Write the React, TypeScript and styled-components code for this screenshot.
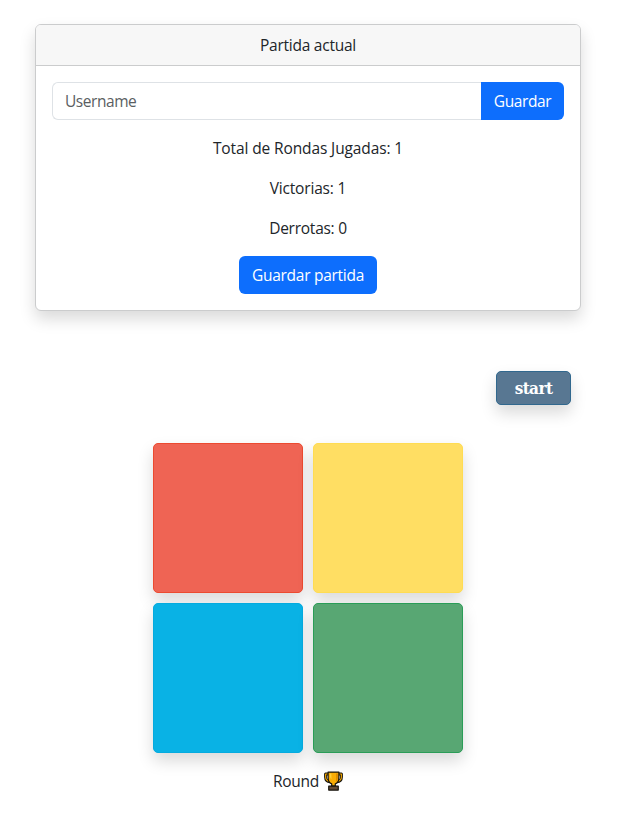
import React from "react";
import styled, { createGlobalStyle } from "styled-components";

const GlobalStyle = createGlobalStyle`
  *, *::before, *::after { box-sizing: border-box; }
  body {
    margin: 0;
    background: #fff;
    color: #212529;
    font-family: "Open Sans", "Noto Sans", sans-serif;
    font-size: 15.5px;
    line-height: 24px;
    overflow: hidden;
  }
`;

const shadow = "0 8px 16px rgba(0, 0, 0, 0.15)";

const Page = styled.main`
  display: flex;
  flex-direction: column;
  align-items: center;
  width: 616px;
  padding-top: 24px;
`;

const Card = styled.section`
  width: 546px;
  border: 1px solid #cbcccd;
  border-radius: 6px;
  background: #fff;
  box-shadow: ${shadow};
`;

const CardHeader = styled.header`
  padding: 8px 16px;
  border-bottom: 1px solid #cbcccd;
  border-radius: 5px 5px 0 0;
  background: #f7f7f7;
  text-align: center;
`;

const CardBody = styled.div`
  display: flex;
  flex-direction: column;
  align-items: center;
  gap: 16px;
  padding: 16px;
`;

const InputGroup = styled.div`
  display: flex;
  width: 100%;
`;

const UserInput = styled.input`
  flex: 1;
  min-width: 0;
  height: 38px;
  padding: 6px 12px;
  border: 1px solid #dee2e6;
  border-right: 0;
  border-radius: 6px 0 0 6px;
  background: #fff;
  font: inherit;
  letter-spacing: -0.45px;
  outline: 0;
  &::placeholder {
    color: #5a5e62;
    opacity: 1;
  }
`;

const PrimaryButton = styled.button<{ $width: number; $attached?: boolean }>`
  width: ${(p) => p.$width}px;
  height: 38px;
  padding: 0;
  border: 0;
  border-radius: ${(p) => (p.$attached ? "0 6px 6px 0" : "6px")};
  background: #0d6efd;
  color: #fff;
  font: inherit;
  letter-spacing: ${(p) => (p.$attached ? -0.4 : -0.27)}px;
  white-space: nowrap;
`;

const Label = styled.p<{ $spacing?: number }>`
  margin: 0;
  white-space: nowrap;
  letter-spacing: ${(p) => p.$spacing ?? -0.25}px;
`;

const StartRow = styled.div`
  display: flex;
  justify-content: flex-end;
  width: 100%;
  margin-top: 60px;
  padding-right: 45px;
`;

const StartButton = styled.button`
  width: 75px;
  height: 34px;
  padding: 0;
  border: 1px solid #31688e;
  border-radius: 5px;
  background: #587792;
  box-shadow: ${shadow};
  color: #fff;
  font: bold 17px/32px "DejaVu Serif Condensed", "DejaVu Serif", serif;
  font-stretch: condensed;
  letter-spacing: -0.6px;
`;

const Board = styled.div`
  display: grid;
  grid-template-columns: repeat(2, 150px);
  grid-auto-rows: 150px;
  gap: 10px;
  margin-top: 38px;
`;

const Tile = styled.button<{ $fill: string; $edge: string }>`
  padding: 0;
  border: 1px solid ${(p) => p.$edge};
  border-radius: 5px;
  background: ${(p) => p.$fill};
  box-shadow: ${shadow};
`;

const RoundLine = styled.div`
  display: flex;
  align-items: center;
  gap: 5px;
  margin-top: 16px;
`;

const TrophySvg = styled.svg`
  display: block;
  width: 19px;
  height: 20px;
`;

function Trophy() {
  return (
    <TrophySvg viewBox="0 0 20 20" preserveAspectRatio="none" aria-hidden="true">
      <g stroke="#16130d" strokeWidth="1.3" strokeLinejoin="round">
        <path d="M5 3H1.6v3c0 3 2 4.5 5 4.7M15 3h3.4v3c0 3-2 4.5-5 4.7" fill="none" strokeWidth="3" />
        <path d="M5 3H1.7v3c0 2.6 1.7 4 4.3 4.4M15 3h3.3v3c0 2.6-1.7 4-4.3 4.4" fill="none" stroke="#f0a500" strokeWidth="1.2" />
        <path d="M4.3 1.1h11.4v5.4c0 3.3-1.4 5.5-3.8 6.3v2.4H8.1v-2.4C5.7 12 4.3 9.8 4.3 6.5z" fill="#f9ad05" />
        <path d="M5 15.2h10v3.9H5z" fill="#654c36" />
      </g>
      <path d="M6.2 2.5h1.6v5.8c-1-.8-1.6-2-1.6-3.5z" fill="#ffcf3c" />
      <path d="M12.8 2.5h1.7v4c0 2.2-.7 3.6-1.7 4.4z" fill="#d98600" />
    </TrophySvg>
  );
}

const tiles = [
  { name: "Rojo", fill: "#ef6454", edge: "#ec4a30" },
  { name: "Amarillo", fill: "#ffde63", edge: "#ffdc52" },
  { name: "Azul", fill: "#09b2e5", edge: "#05abdf" },
  { name: "Verde", fill: "#58a773", edge: "#2a9d57" },
];

export default function App() {
  return (
    <>
      <GlobalStyle />
      <Page>
        <Card>
          <CardHeader><Label>Partida actual</Label></CardHeader>
          <CardBody>
            <InputGroup>
              <UserInput placeholder="Username" />
              <PrimaryButton $width={83} $attached>Guardar</PrimaryButton>
            </InputGroup>
            <Label $spacing={-0.12}>Total de Rondas Jugadas: 1</Label>
            <Label $spacing={-0.17}>Victorias: 1</Label>
            <Label>Derrotas: 0</Label>
            <PrimaryButton $width={138}>Guardar partida</PrimaryButton>
          </CardBody>
        </Card>
        <StartRow><StartButton>start</StartButton></StartRow>
        <Board>
          {tiles.map((t) => (
            <Tile key={t.name} aria-label={t.name} $fill={t.fill} $edge={t.edge} />
          ))}
        </Board>
        <RoundLine><Label>Round</Label><Trophy /></RoundLine>
      </Page>
    </>
  );
}
